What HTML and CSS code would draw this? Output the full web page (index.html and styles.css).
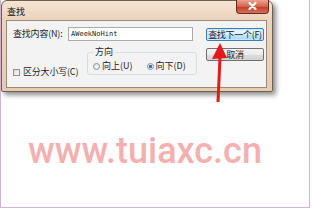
FILE: index.html
```html
<!DOCTYPE html>
<html>
<head>
<meta charset="utf-8">
<link rel="stylesheet" href="styles.css">
</head>
<body>
<div class="page">
  <div class="window">
    <div class="titlebar">
      <span class="title">查找</span>
      <div class="close">
        <svg width="33" height="14" viewBox="0 0 33 14"><path d="M13.5 4 L19.5 10 M19.5 4 L13.5 10" stroke="#fff" stroke-width="2.2" stroke-linecap="round"/></svg>
      </div>
    </div>
    <div class="client">
      <div class="main">
        <div class="find-row">
          <span class="lbl">查找内容(N):</span>
          <div class="input">AWeekNoHint</div>
        </div>
        <div class="opts-row">
          <div class="check-wrap"><span class="checkbox"></span><span>区分大小写(C)</span></div>
          <fieldset class="group">
            <legend>方向</legend>
            <div class="radios">
              <span class="opt"><span class="radio"></span>向上(U)</span>
              <span class="opt"><span class="radio checked"></span>向下(D)</span>
            </div>
          </fieldset>
        </div>
      </div>
      <div class="buttons">
        <div class="btn default">查找下一个(F)</div>
        <div class="btn">取消</div>
      </div>
    </div>
  </div>
  <div class="watermark">www.tuiaxc.cn</div>
  <svg class="arrow" width="312" height="209" viewBox="0 0 312 209">
    <polygon points="220,43 212,59 227,58" fill="#e41a1a"/>
    <line x1="220" y1="57" x2="218" y2="102" stroke="#e41a1a" stroke-width="3"/>
  </svg>
</div>
</body>
</html>
```
FILE: styles.css
```css
html, body {
  margin: 0;
  padding: 0;
  background: #fff;
}
body {
  font-family: "Noto Sans CJK SC", "Noto Sans", sans-serif;
  font-size: 9px;
  line-height: 10px;
  color: #1e1e1e;
}
.page {
  position: relative;
  width: 308px;
  height: 207px;
  border-left: 1px solid #cfb2d4;
  border-right: 1px solid #cfb2d4;
  border-bottom: 1px solid #cfb2d4;
  background: #fff;
  overflow: hidden;
}
.window {
  width: 272px;
  height: 92px;
  box-sizing: border-box;
  border: 1px solid #6f5d4d;
  border-radius: 6px 6px 2px 2px;
  background: linear-gradient(#f4e4d4, #ecd4bc 18px, #e6ccb2);
  padding: 0 5px 3px 4px;
  box-shadow: 3px 3px 5px rgba(0, 0, 0, 0.45);
  display: flex;
  flex-direction: column;
}
.titlebar {
  height: 19px;
  display: flex;
  align-items: flex-start;
  justify-content: space-between;
}
.title {
  margin-top: 6px;
  margin-left: 1px;
  font-size: 9px;
  line-height: 10px;
  color: #111;
}
.close {
  width: 33px;
  height: 14px;
  margin-top: -1px;
  margin-right: -2px;
  box-sizing: border-box;
  border: 1px solid #6a2b20;
  border-top: none;
  border-radius: 0 0 4px 4px;
  background: linear-gradient(#eba392, #d6614c 50%, #c2402c 55%, #d8705a);
}
.close svg {
  display: block;
  margin: -1px 0 0 -1px;
}
.client {
  flex: 1;
  display: flex;
  background: #f3f3f3;
  border: 1px solid #9b8a79;
  padding: 6px 6px 0 6px;
}
.main {
  display: flex;
  flex-direction: column;
}
.find-row {
  display: flex;
  align-items: center;
}
.lbl {
  width: 55px;
  white-space: nowrap;
  letter-spacing: -0.2px;
}
.input {
  width: 125px;
  height: 14px;
  box-sizing: border-box;
  border: 1px solid #a9abb1;
  background: #fff;
  padding-left: 2px;
  font-family: "DejaVu Sans Mono", monospace;
  font-size: 7px;
  line-height: 12px;
  color: #222;
}
.opts-row {
  display: flex;
  align-items: flex-start;
  margin-top: 6px;
}
.check-wrap {
  width: 74px;
  margin-top: 20px;
  display: flex;
  align-items: center;
  gap: 3px;
  white-space: nowrap;
  letter-spacing: -0.2px;
}
.checkbox {
  width: 7px;
  height: 7px;
  flex: none;
  box-sizing: border-box;
  border: 1px solid #8e8f8f;
  background: linear-gradient(135deg, #dcdcdc, #fafafa);
}
.group {
  width: 110px;
  box-sizing: border-box;
  margin: 0;
  padding: 4px 4px 3px 5px;
  border: 1px solid #d5dce2;
  border-radius: 3px;
}
.group legend {
  padding: 0 2px;
  line-height: 10px;
  font-size: 9px;
}
.radios {
  display: flex;
  gap: 14px;
  height: 10px;
  align-items: center;
  white-space: nowrap;
}
.opt {
  display: flex;
  align-items: center;
  gap: 2px;
}
.radio {
  width: 7px;
  height: 7px;
  flex: none;
  box-sizing: border-box;
  border: 1px solid #909090;
  border-radius: 50%;
  background: radial-gradient(circle at 60% 60%, #fdfdfd, #d2d2d2);
}
.radio.checked {
  background: radial-gradient(circle, #1f61b3 0, #3f86d6 1.6px, #dfe9f3 2px, #f7f7f7 3px);
}
.buttons {
  margin-left: 9px;
  display: flex;
  flex-direction: column;
  gap: 7px;
}
.btn {
  width: 58px;
  height: 13px;
  box-sizing: border-box;
  border: 1px solid #707070;
  border-radius: 2px;
  background: linear-gradient(#f4f4f4, #eaeaea 50%, #dcdcdc 52%, #d2d2d2);
  text-align: center;
  line-height: 11px;
  font-size: 9px;
  white-space: nowrap;
  letter-spacing: -0.3px;
  overflow: hidden;
}
.btn.default {
  margin-top: 1px;
  border-color: #3c7fb1;
  background: linear-gradient(#eaf6fd, #d9f0fc 50%, #bee6fd 52%, #a7d9f5);
  box-shadow: inset 0 0 0 1px #c6e8fa;
}
.watermark {
  margin-top: 41px;
  padding-left: 27px;
  font-family: Roboto, "Noto Sans", sans-serif;
  font-weight: 500;
  font-size: 36px;
  line-height: 36px;
  color: #f4b0b0;
}
.arrow {
  position: absolute;
  left: -1px;
  top: 0;
}
```
